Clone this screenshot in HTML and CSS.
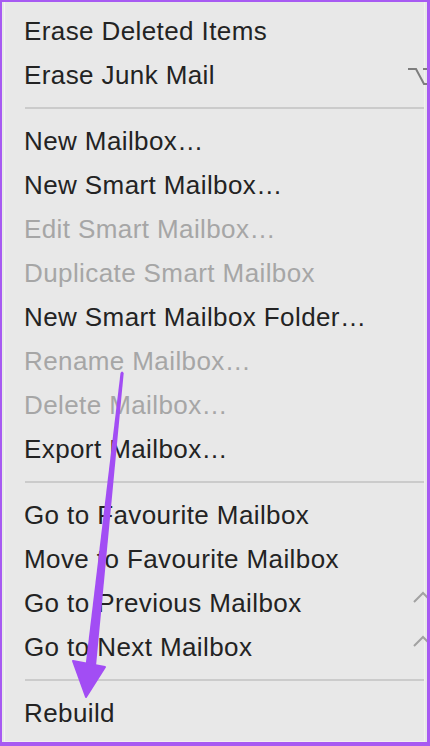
FILE: index.html
```html
<!DOCTYPE html>
<html lang="en">
<head>
<meta charset="utf-8">
<title>Mailbox menu</title>
<link rel="stylesheet" href="styles.css">
</head>
<body>
<div class="frame">
  <div class="menu">
    <div class="item">Erase Deleted Items</div>
    <div class="item"><span>Erase Junk Mail</span>
      <svg class="key" width="24" height="20" viewBox="0 0 24 20"><path d="M0 3 H8 L16 18 H24 M15 3 H24" fill="none" stroke="#7d7d7d" stroke-width="2"/></svg>
    </div>
    <div class="sep"></div>
    <div class="item">New Mailbox…</div>
    <div class="item">New Smart Mailbox…</div>
    <div class="item off">Edit Smart Mailbox…</div>
    <div class="item off">Duplicate Smart Mailbox</div>
    <div class="item">New Smart Mailbox Folder…</div>
    <div class="item off">Rename Mailbox…</div>
    <div class="item off">Delete Mailbox…</div>
    <div class="item">Export Mailbox…</div>
    <div class="sep"></div>
    <div class="item">Go to Favourite Mailbox</div>
    <div class="item">Move to Favourite Mailbox</div>
    <div class="item"><span>Go to Previous Mailbox</span>
      <svg class="key caret" width="24" height="20" viewBox="0 0 24 20"><path d="M2 11 L11 2 L20 11" fill="none" stroke="#a2a2a2" stroke-width="2"/></svg>
    </div>
    <div class="item"><span>Go to Next Mailbox</span>
      <svg class="key caret" width="24" height="20" viewBox="0 0 24 20"><path d="M2 11 L11 2 L20 11" fill="none" stroke="#a2a2a2" stroke-width="2"/></svg>
    </div>
    <div class="sep"></div>
    <div class="item">Rebuild</div>
  </div>
  <svg class="arrow" width="430" height="746" viewBox="0 0 430 746">
    <path d="M120.5 373 Q122 370 123.7 373 L96 666 L85.5 666 Z" fill="#a24df4"/>
    <path d="M73 661 L105 667 L86 697 Z" fill="#a24df4" stroke="#a24df4" stroke-width="2" stroke-linejoin="round"/>
  </svg>
</div>
</body>
</html>
```
FILE: styles.css
```css
html, body {
  margin: 0;
  padding: 0;
}
body {
  width: 430px;
  height: 746px;
  overflow: hidden;
  background: #e8e8e8;
  font-family: "Liberation Sans", Arial, sans-serif;
}
.frame {
  position: relative;
  box-sizing: border-box;
  width: 430px;
  height: 746px;
  border: solid #a75af2;
  border-width: 2px 3px 4px 2px;
  background: #e8e8e8;
  overflow: hidden;
}
.menu {
  box-sizing: border-box;
  height: 100%;
  margin-left: 2px;
  margin-right: 2px;
  padding: 7px 0 0 19px;
  border-left: 1px solid #f3f3f3;
  border-right: 1px solid #f1f1f1;
  border-bottom: 1px solid #f1eef1;
}
.item {
  display: flex;
  justify-content: space-between;
  align-items: center;
  height: 44px;
  line-height: 44px;
  font-size: 26px;
  letter-spacing: 0.4px;
  color: #232323;
  white-space: nowrap;
}
.item.off {
  color: #a6a6a6;
}
.key {
  flex: none;
  margin-right: -8px;
  margin-top: 2px;
}
.caret {
  margin-right: -12px;
  margin-top: -4px;
}
.sep {
  height: 22px;
  display: flex;
  align-items: center;
}
.sep::before {
  content: "";
  display: block;
  width: 100%;
  height: 2px;
  margin-left: 1px;
  background: #cbcbcb;
}
.arrow {
  position: absolute;
  left: -2px;
  top: -2px;
  pointer-events: none;
}
```
